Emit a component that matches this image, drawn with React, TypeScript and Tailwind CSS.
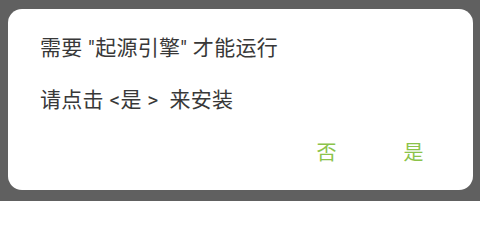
import React from "react";

export default function App() {
  const font = { fontFamily: '"Roboto", "Noto Sans CJK SC", sans-serif' };
  return (
    <div className="w-[480px] h-[201px] bg-[#606060] pt-[9px] pl-[8px] pr-[7px] pb-[11px]" style={font}>
      <div className="h-full bg-white rounded-[14px] flex flex-col">
        <div className="pl-[32px] pt-[25px] text-[21px] leading-[28px] tracking-[0.3px] text-[#383838] whitespace-pre">
          需要 "起源引擎" 才能运行
        </div>
        <div className="pl-[32px] mt-[24px] text-[21px] leading-[28px] tracking-[0.3px] text-[#383838] whitespace-pre">
          请点击 &lt;是 &gt;  来安装
        </div>
        <div className="mt-[25px] flex justify-end pr-[16px] text-[20px] leading-[28px] text-[#8bc34a]">
          <div className="w-[87px] text-center">否</div>
          <div className="w-[87px] text-center">是</div>
        </div>
      </div>
    </div>
  );
}
